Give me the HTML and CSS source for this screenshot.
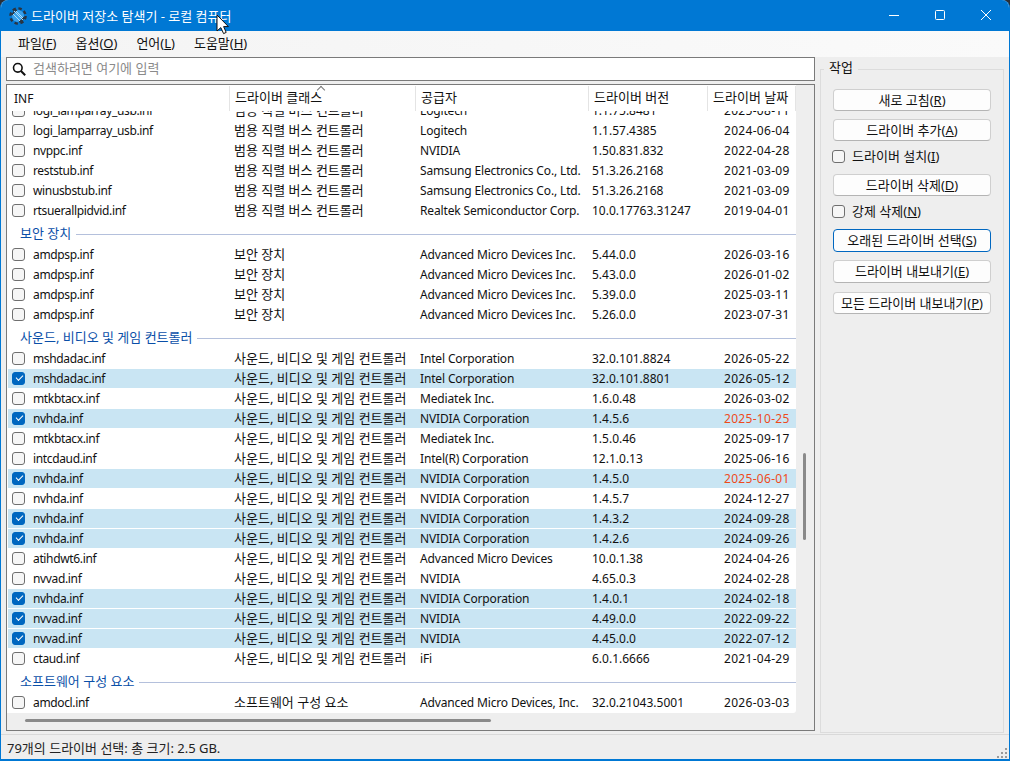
FILE: index.html
```html
<!DOCTYPE html>
<html lang="ko">
<head>
    <meta charset="UTF-8">
    <title>드라이버 저장소 탐색기 - 로컬 컴퓨터</title>
    <link rel="stylesheet" href="styles.css">
</head>
<body>
    <div class="window">
        <div class="titlebar">
            <svg class="app-icon" width="18" height="18" viewBox="0 0 18 18">
                <circle cx="9" cy="9" r="6" fill="#3aa0ea"/>
                <circle cx="9" cy="9" r="7.6" fill="none" stroke="#2a3340" stroke-width="2.4" stroke-dasharray="3.4 2.6"/>
                <path d="M3.5 8A6 6 0 0 1 8 3.2M14.5 10A6 6 0 0 1 10 14.8" fill="none" stroke="#2a3340" stroke-width="1.6"/>
                <path d="M5 4L14 13M4 7L11 14M7 4L14 11" stroke="#a8dcfb" stroke-width="1"/>
            </svg>
            <span class="title">드라이버 저장소 탐색기 - 로컬 컴퓨터</span>
            <div class="winbtns">
                <svg width="46" height="31" viewBox="0 0 46 31"><path d="M18 15.5H28" stroke="#fff"/></svg>
                <svg width="46" height="31" viewBox="0 0 46 31"><rect x="18.5" y="10.5" width="9" height="9" rx="1" fill="none" stroke="#fff"/></svg>
                <svg width="46" height="31" viewBox="0 0 46 31"><path d="M18 10L28 20M28 10L18 20" stroke="#fff"/></svg>
            </div>
        </div>

        <div class="menubar">
            <span>파일(<u>F</u>)</span>
            <span>옵션(<u>O</u>)</span>
            <span>언어(<u>L</u>)</span>
            <span>도움말(<u>H</u>)</span>
        </div>

        <div class="content">
            <div class="left">
                <div class="search">
                    <svg width="14" height="14" viewBox="0 0 14 14"><circle cx="5.8" cy="5.8" r="4.3" fill="none" stroke="#111" stroke-width="1.6"/><path d="M9 9L13.2 13.2" stroke="#111" stroke-width="2"/></svg>
                    <span class="placeholder">검색하려면 여기에 입력</span>
                </div>

                <div class="list">
                    <div class="list-main">
                        <div class="list-cols">
                            <div class="head row-grid">
                                <div class="inf-head">INF</div>
                                <div class="sorted">드라이버 클래스</div>
                                <div>공급자</div>
                                <div>드라이버 버전</div>
                                <div class="date-head">드라이버 날짜</div>
                            </div>
                            <div class="rows-clip">
                                <div class="rows" id="rows"></div>
                            </div>
                        </div>
                        <div class="vscroll"><div class="vthumb"></div></div>
                    </div>
                    <div class="hscroll"><div class="hthumb"></div></div>
                </div>
            </div>

            <div class="tasks">
                <div class="legend">작업</div>
                <button class="btn">새로 고침(<u>R</u>)</button>
                <button class="btn">드라이버 추가(<u>A</u>)</button>
                <label class="check"><i></i><span>드라이버 설치(<u>I</u>)</span></label>
                <button class="btn">드라이버 삭제(<u>D</u>)</button>
                <label class="check"><i></i><span>강제 삭제(<u>N</u>)</span></label>
                <button class="btn focus">오래된 드라이버 선택(<u>S</u>)</button>
                <button class="btn tall">드라이버 내보내기(<u>E</u>)</button>
                <button class="btn">모든 드라이버 내보내기(<u>P</u>)</button>
            </div>
        </div>

        <div class="statusbar">
            <span>79개의 드라이버 선택: 총 크기: 2.5 GB.</span>
            <svg width="12" height="12" viewBox="0 0 12 12" fill="#9a9a9a"><rect x="9" y="1" width="2" height="2"/><rect x="5" y="5" width="2" height="2"/><rect x="9" y="5" width="2" height="2"/><rect x="1" y="9" width="2" height="2"/><rect x="5" y="9" width="2" height="2"/><rect x="9" y="9" width="2" height="2"/></svg>
        </div>
    </div>

    <svg class="cursor" width="16" height="24" viewBox="0 0 16 24">
        <path d="M1 1V17L4.8 13.6L7.6 19.6L10.2 18.4L7.6 12.6H12.4Z" fill="#fff" stroke="#111" stroke-width="1"/>
    </svg>

    <script src="app.js"></script>
</body>
</html>
```

FILE: styles.css
```css
* {
    margin: 0;
    padding: 0;
    box-sizing: border-box;
}

html, body {
    width: 1010px;
    height: 761px;
    overflow: hidden;
    background: #2b2f36;
}

body {
    font-family: "Noto Sans", "Noto Sans CJK KR", sans-serif;
    font-size: 13px;
    color: #111;
    position: relative;
}

.window {
    width: 1010px;
    height: 761px;
    display: flex;
    flex-direction: column;
    background: #eeeeee;
    border: 1px solid #0078d4;
    border-top: none;
    border-bottom-width: 2px;
    border-radius: 8px 8px 0 0;
    overflow: hidden;
}

.titlebar {
    height: 31px;
    flex: none;
    display: flex;
    align-items: center;
    background: #0078d4;
    color: #fff;
    padding-left: 8px;
}

.app-icon {
    margin-right: 4px;
}

.title {
    margin-top: -1px;
}

.winbtns {
    margin-left: auto;
    display: flex;
}

.menubar {
    height: 26px;
    flex: none;
    display: flex;
    align-items: center;
    background: linear-gradient(90deg, #f4f4f4, #fafafa);
    padding: 0 0 3px 17px;
    gap: 19px;
}

.content {
    flex: 1;
    min-height: 0;
    display: flex;
    padding: 0 5px 0 4px;
}

.left {
    width: 810px;
    flex: none;
    padding-left: 1px;
    display: flex;
    flex-direction: column;
}

.search {
    height: 24px;
    flex: none;
    display: flex;
    align-items: center;
    gap: 7px;
    background: #fff;
    border: 1px solid #7a7a7a;
    padding-left: 5px;
    color: #8a8a8a;
}

.placeholder {
    margin-top: -3px;
}

.list {
    margin-top: 3px;
    height: 649px;
    display: flex;
    flex-direction: column;
    border: 1px solid #7a7a7a;
    background: #eeeeee;
}

.list-main {
    flex: 1;
    min-height: 0;
    display: flex;
}

.list-cols {
    width: 789px;
    background: #fff;
    display: flex;
    flex-direction: column;
    overflow: hidden;
    border-radius: 0 0 3px 0;
}

.row-grid {
    display: grid;
    grid-template-columns: 223px 186px 173px 119px 88px;
}

.head {
    height: 26px;
    flex: none;
    background: #fff;
    align-items: center;
}

.head > div {
    height: 25px;
    line-height: 23px;
    padding-left: 5px;
    border-right: 1px solid #e4e4e4;
    white-space: nowrap;
}

.head > .inf-head {
    padding-left: 7px;
    font-size: 12px;
    line-height: 26px;
}

.sorted {
    position: relative;
}

.sorted::after {
    content: "";
    position: absolute;
    left: 88px;
    top: 1px;
    width: 5px;
    height: 5px;
    border-left: 1px solid #777;
    border-top: 1px solid #777;
    transform: rotate(45deg);
}

.rows-clip {
    flex: 1;
    min-height: 0;
    overflow: hidden;
}

.rows {
    margin-top: -11px;
}

.row {
    height: 20px;
    margin-left: 1px;
    grid-template-columns: 222px 186px 172px 120px 88px;
    align-items: center;
    white-space: nowrap;
    font-size: 12px;
}

.row > div {
    padding-left: 4px;
    overflow: hidden;
}

.row > .inf {
    display: flex;
    align-items: center;
    gap: 8px;
    letter-spacing: -0.35px;
}

.row > .cls {
    font-size: 13px;
    padding-bottom: 2px;
}

.row > .prov {
    letter-spacing: -0.15px;
}

.row > .date {
    padding-left: 16px;
    letter-spacing: 0.3px;
}

/* the white line on top of a selected row keeps neighbours apart */
.row.sel {
    background: #c9e5f3;
    box-shadow: inset 0 1px 0 #fff;
}

.row.old .date {
    color: #ee4a1c;
}

.box {
    width: 13px;
    height: 13px;
    flex: none;
    border: 1px solid #6f6f6f;
    border-radius: 3px;
    background: #f6f6f6;
    display: block;
    position: relative;
}

.row.sel .box {
    background: #0067c0;
    border-color: #0067c0;
}

.row.sel .box::after {
    content: "";
    position: absolute;
    left: 2.5px;
    top: 2.5px;
    width: 6px;
    height: 3px;
    border-left: 1px solid #fff;
    border-bottom: 1px solid #fff;
    transform: rotate(-45deg);
}

.group {
    height: 24px;
    display: flex;
    align-items: center;
    gap: 5px;
    padding-left: 13px;
    color: #0a4fa8;
}

.group::after {
    content: "";
    flex: 1;
    height: 1px;
    margin-top: 4px;
    background: #b4c0dc;
}

.vscroll {
    flex: 1;
    position: relative;
    background: #eeeeee;
}

.vthumb {
    position: absolute;
    left: 7px;
    top: 368px;
    width: 3px;
    height: 87px;
    border-radius: 2px;
    background: #8a8a8a;
}

.hscroll {
    height: 17px;
    flex: none;
    position: relative;
    background: #eeeeee;
}

.hthumb {
    position: absolute;
    left: 18px;
    top: 6px;
    width: 466px;
    height: 3px;
    border-radius: 2px;
    background: #8a8a8a;
}

.tasks {
    position: relative;
    flex: none;
    width: 184px;
    height: 664px;
    margin: 12px 0 0 5px;
    border: 1px solid #dcdcdc;
    padding: 19px 12px 0 12px;
    display: flex;
    flex-direction: column;
}

.legend {
    position: absolute;
    top: -13px;
    left: 3px;
    padding: 0 5px;
    background: #eeeeee;
}

.btn {
    height: 22px;
    flex: none;
    font: inherit;
    color: #111;
    background: #fdfdfd;
    border: 1px solid #cfcfcf;
    border-bottom-color: #b4b4b4;
    border-radius: 4px;
    margin-bottom: 8px;
    padding-bottom: 2px;
}

.btn.focus {
    height: 23px;
    border: 1px solid #0067c0;
}

.btn.tall {
    height: 23px;
    margin-bottom: 9px;
}

.check {
    height: 13px;
    flex: none;
    display: flex;
    align-items: center;
    gap: 7px;
    margin: 1px 0 11px -1px;
}

.check span {
    margin-top: -2px;
}

.check i {
    width: 13px;
    height: 13px;
    flex: none;
    border: 1px solid #6f6f6f;
    border-radius: 3px;
    background: #f6f6f6;
}

.statusbar {
    height: 25px;
    flex: none;
    display: flex;
    align-items: center;
    justify-content: space-between;
    margin-top: 3px;
    border-top: 1px solid #d9d9d9;
    padding: 0 1px 0 6px;
    color: #222;
}

.statusbar svg {
    align-self: flex-end;
}

/* mouse pointer sits over the title */
.cursor {
    position: absolute;
    left: 216px;
    top: 14px;
}
```

FILE: app.js
```js
const USB = '범용 직렬 버스 컨트롤러';
const SEC = '보안 장치';
const SND = '사운드, 비디오 및 게임 컨트롤러';
const SW = '소프트웨어 구성 요소';
const AMD = 'Advanced Micro Devices Inc.';
const NV = 'NVIDIA Corporation';
const SAM = 'Samsung Electronics Co., Ltd.';

// [inf, class, provider, version, date, state]  state: 1 selected, 2 selected + old
const data = [
    ['logi_lamparray_usb.inf', USB, 'Logitech', '1.1.75.8481', '2025-08-11'],
    ['logi_lamparray_usb.inf', USB, 'Logitech', '1.1.57.4385', '2024-06-04'],
    ['nvppc.inf', USB, 'NVIDIA', '1.50.831.832', '2022-04-28'],
    ['reststub.inf', USB, SAM, '51.3.26.2168', '2021-03-09'],
    ['winusbstub.inf', USB, SAM, '51.3.26.2168', '2021-03-09'],
    ['rtsuerallpidvid.inf', USB, 'Realtek Semiconductor Corp.', '10.0.17763.31247', '2019-04-01'],
    { group: SEC },
    ['amdpsp.inf', SEC, AMD, '5.44.0.0', '2026-03-16'],
    ['amdpsp.inf', SEC, AMD, '5.43.0.0', '2026-01-02'],
    ['amdpsp.inf', SEC, AMD, '5.39.0.0', '2025-03-11'],
    ['amdpsp.inf', SEC, AMD, '5.26.0.0', '2023-07-31'],
    { group: SND },
    ['mshdadac.inf', SND, 'Intel Corporation', '32.0.101.8824', '2026-05-22'],
    ['mshdadac.inf', SND, 'Intel Corporation', '32.0.101.8801', '2026-05-12', 1],
    ['mtkbtacx.inf', SND, 'Mediatek Inc.', '1.6.0.48', '2026-03-02'],
    ['nvhda.inf', SND, NV, '1.4.5.6', '2025-10-25', 2],
    ['mtkbtacx.inf', SND, 'Mediatek Inc.', '1.5.0.46', '2025-09-17'],
    ['intcdaud.inf', SND, 'Intel(R) Corporation', '12.1.0.13', '2025-06-16'],
    ['nvhda.inf', SND, NV, '1.4.5.0', '2025-06-01', 2],
    ['nvhda.inf', SND, NV, '1.4.5.7', '2024-12-27'],
    ['nvhda.inf', SND, NV, '1.4.3.2', '2024-09-28', 1],
    ['nvhda.inf', SND, NV, '1.4.2.6', '2024-09-26', 1],
    ['atihdwt6.inf', SND, 'Advanced Micro Devices', '10.0.1.38', '2024-04-26'],
    ['nvvad.inf', SND, 'NVIDIA', '4.65.0.3', '2024-02-28'],
    ['nvhda.inf', SND, NV, '1.4.0.1', '2024-02-18', 1],
    ['nvvad.inf', SND, 'NVIDIA', '4.49.0.0', '2022-09-22', 1],
    ['nvvad.inf', SND, 'NVIDIA', '4.45.0.0', '2022-07-12', 1],
    ['ctaud.inf', SND, 'iFi', '6.0.1.6666', '2021-04-29'],
    { group: SW },
    ['amdocl.inf', SW, 'Advanced Micro Devices, Inc.', '32.0.21043.5001', '2026-03-03']
];

const rows = document.getElementById('rows');
data.forEach(function (d) {
    const el = document.createElement('div');
    if (d.group) {
        el.className = 'group';
        el.textContent = d.group;
    } else {
        el.className = 'row row-grid' + (d[5] ? ' sel' : '') + (d[5] === 2 ? ' old' : '');
        el.innerHTML = '<div class="inf"><i class="box"></i>' + d[0] + '</div>'
            + '<div class="cls">' + d[1] + '</div>'
            + '<div class="prov">' + d[2] + '</div>'
            + '<div class="ver">' + d[3] + '</div>'
            + '<div class="date">' + d[4] + '</div>';
    }
    rows.appendChild(el);
});
```
